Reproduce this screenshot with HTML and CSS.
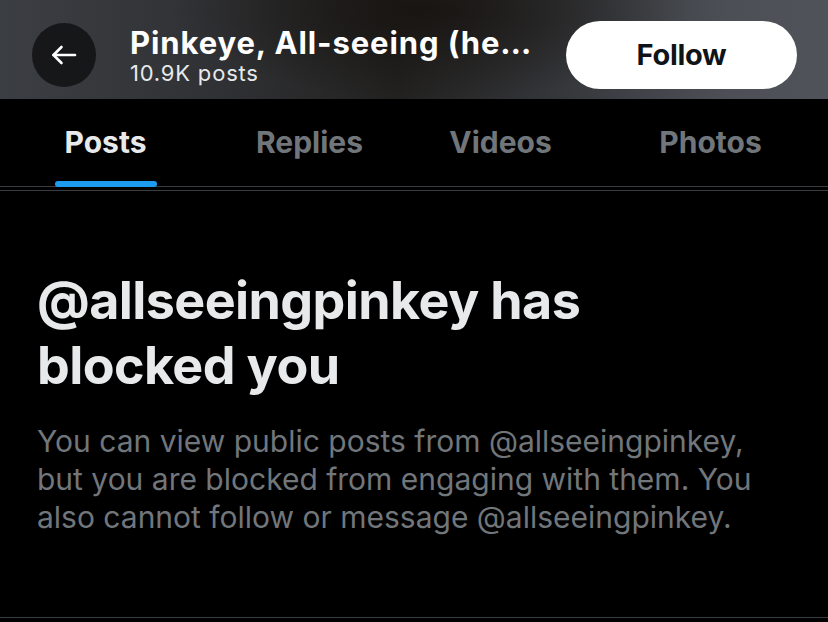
FILE: index.html
```html
<!DOCTYPE html>
<html lang="en">
<head>
<meta charset="utf-8">
<title>Pinkeye, All-seeing</title>
<link rel="stylesheet" href="styles.css">
</head>
<body>
<header class="top">
  <button class="back" aria-label="Back">
    <svg width="26" height="20" viewBox="0 0 26 20" fill="none" stroke="#fff" stroke-width="2.6" stroke-linecap="round" stroke-linejoin="round">
      <path d="M24 10H2.5"/>
      <path d="M10.5 2L2.5 10L10.5 18"/>
    </svg>
  </button>
  <div class="titles">
    <div class="name">Pinkeye, All-seeing (he…</div>
    <div class="count">10.9K posts</div>
  </div>
  <button class="follow">Follow</button>
</header>
<nav class="tabs">
  <div class="tab active"><span class="label">Posts</span><span class="bar"></span></div>
  <div class="tab"><span class="label">Replies</span></div>
  <div class="tab"><span class="label">Videos</span></div>
  <div class="tab"><span class="label">Photos</span></div>
</nav>
<div class="rule"></div>
<main class="blocked">
  <h1 class="headline">@allseeingpinkey has blocked you</h1>
  <p class="message">You can view public posts from @allseeingpinkey, but you are blocked from engaging with them. You also cannot follow or message @allseeingpinkey.</p>
</main>
</body>
</html>
```

FILE: styles.css
```css
* { box-sizing: border-box; }

html, body {
  margin: 0;
  background: #000;
  font-family: Inter, "Noto Sans", "Liberation Sans", sans-serif;
  width: 828px;
  height: 622px;
  overflow: hidden;
}

.top {
  height: 99px;
  display: flex;
  align-items: center;
  padding: 10px 31px 0 32px;
  background:
    radial-gradient(ellipse 260px 90px at 430px 10px, rgba(20,16,12,0.75), rgba(20,16,12,0) 100%),
    linear-gradient(90deg, #3b3e43 0%, #2f3033 28%, #222120 48%, #35373b 68%, #4c5056 88%, #50545a 100%);
}

.back {
  width: 64px;
  height: 64px;
  border-radius: 50%;
  border: none;
  background: rgba(10, 10, 10, 0.72);
  display: flex;
  align-items: center;
  justify-content: center;
  padding: 0;
  flex: none;
}

.titles {
  flex: 1;
  min-width: 0;
  margin-left: 34px;
  color: #fff;
}

.name {
  font-size: 31px;
  line-height: 36px;
  font-weight: 700;
  letter-spacing: 0.9px;
  white-space: nowrap;
  overflow: hidden;
}

.count {
  font-size: 22px;
  line-height: 24px;
  font-weight: 400;
  letter-spacing: 0.8px;
  color: #e7e9ea;
}

.follow {
  flex: none;
  width: 231px;
  height: 68px;
  border: none;
  border-radius: 34px;
  background: #fff;
  color: #0f1419;
  font-family: inherit;
  font-size: 29px;
  font-weight: 700;
  letter-spacing: -0.3px;
  margin-left: 20px;
}

.tabs {
  height: 88px;
  display: grid;
  grid-template-columns: 211px 197px 185px 1fr;
  padding-top: 25px;
  border-bottom: 1px solid #3a3d40;
}

.tab {
  display: flex;
  flex-direction: column;
  align-items: center;
}

.label {
  font-size: 30px;
  line-height: 36px;
  font-weight: 700;
  color: #71767b;
  letter-spacing: 0;
}

.tab.active .label { color: #e7e9ea; }

.bar {
  margin-top: 21px;
  width: 102px;
  height: 6px;
  border-radius: 3px;
  background: #1d9bf0;
}

.rule {
  margin-top: 3px;
  height: 1px;
  background: #3a3d40;
}

.blocked {
  height: 427px;
  padding: 77px 37px 0 37px;
  border-bottom: 1px solid #3a3d40;
}

.headline {
  margin: 0;
  max-width: 700px;
  font-size: 52px;
  line-height: 65px;
  font-weight: 700;
  color: #e7e9ea;
  letter-spacing: -0.6px;
}

.message {
  margin: 24px 0 0 0;
  max-width: 718px;
  font-size: 30px;
  line-height: 38px;
  color: #71767b;
  letter-spacing: 0;
}
```
